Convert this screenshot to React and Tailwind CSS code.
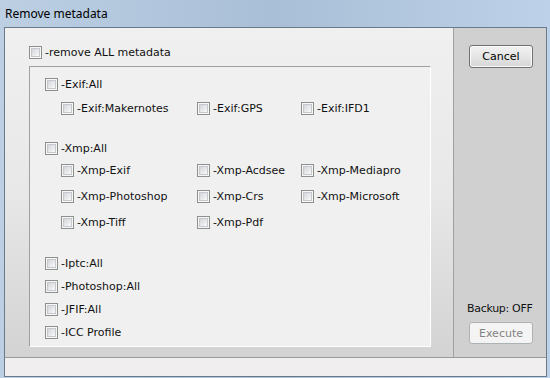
import React from "react";

const font = { fontFamily: '"DejaVu Sans", Verdana, sans-serif' };

function Box() {
  return (
    <span className="box-border flex h-[13px] w-[13px] shrink-0 border border-[#8e8f8f] bg-[#f7f7f7] p-[1px]">
      <span className="box-border flex-1 border border-[#c5c8cc] bg-gradient-to-br from-[#d3d5d9] via-[#e6e7e9] to-[#fbfbfb]" />
    </span>
  );
}

function Check({ label, className = "" }) {
  return (
    <div className={"flex h-[22px] items-center gap-[3px] " + className}>
      <Box />
      <span className="whitespace-nowrap text-[11px] leading-none text-[#111]">{label}</span>
    </div>
  );
}

export default function App() {
  return (
    <div
      className="flex h-[378px] w-[550px] flex-col overflow-hidden bg-gradient-to-r from-[#bccfe3] via-[#a9bfd7] to-[#bdd2e8]"
      style={font}
    >
      {/* title bar */}
      <div className="flex h-[27px] shrink-0 items-center pl-[5px]">
        <span
          className="text-[12px] leading-none text-black"
          style={{ fontFamily: '"Noto Sans", "Open Sans", sans-serif' }}
        >
          Remove metadata
        </span>
      </div>
      {/* window body */}
      <div className="flex flex-1 pb-[1px] pl-[4px] pr-[3px]">
        <div className="flex flex-1 flex-col border border-[#6b7a8b]">
          <div className="flex flex-1">
            {/* left panel */}
            <div className="flex w-[448px] flex-col bg-gradient-to-b from-[#f0f0f0] via-[#e8e8e8] to-[#d3d3d3]">
              <div className="pl-[24px] pt-[13px]">
                <Check label="-remove ALL metadata" />
              </div>
              <div className="ml-[24px] mt-[3px] box-border h-[281px] w-[402px] border-b border-l border-r border-t border-b-white border-l-[#a0a0a0] border-r-white border-t-[#a0a0a0] bg-[#f0f0f0] pl-[15px] pt-[6px]">
                <Check label="-Exif:All" />
                <div className="mt-[2px] grid grid-cols-[136px_104px_auto] pl-[16px]">
                  <Check label="-Exif:Makernotes" />
                  <Check label="-Exif:GPS" />
                  <Check label="-Exif:IFD1" />
                </div>
                <Check label="-Xmp:All" className="mt-[18px]" />
                <div className="grid grid-cols-[136px_104px_auto] gap-y-[4px] pl-[16px]">
                  <Check label="-Xmp-Exif" />
                  <Check label="-Xmp-Acdsee" />
                  <Check label="-Xmp-Mediapro" />
                  <Check label="-Xmp-Photoshop" />
                  <Check label="-Xmp-Crs" />
                  <Check label="-Xmp-Microsoft" />
                  <Check label="-Xmp-Tiff" />
                  <Check label="-Xmp-Pdf" />
                </div>
                <Check label="-Iptc:All" className="mt-[19px]" />
                <Check label="-Photoshop:All" className="mt-[1px]" />
                <Check label="-JFIF:All" className="mt-[1px]" />
                <Check label="-ICC Profile" className="mt-[1px]" />
              </div>
            </div>
            {/* right panel */}
            <div className="flex w-[93px] flex-col items-start border-l border-[#a0a0a0] bg-[#d0d0d0] pl-[15px] pt-[17px]">
              <button className="box-border flex h-[23px] w-[64px] items-center justify-center rounded-[3px] border border-[#707070] bg-gradient-to-b from-[#f2f2f2] via-[#e6e6e6] to-[#d6d6d6] text-[11px] leading-none text-black shadow-[inset_0_0_0_1px_#fbfbfb]">
                Cancel
              </button>
              <div className="flex-1" />
              <span className="-ml-[2px] text-[11px] leading-none tracking-[-0.3px] text-[#111]">Backup: OFF</span>
              <button className="mb-[13px] mt-[8px] box-border flex h-[22px] w-[64px] items-center justify-center rounded-[3px] border border-[#adb2b5] bg-[#f4f4f4] text-[11px] leading-none text-[#838383]">
                Execute
              </button>
            </div>
          </div>
          {/* status bar */}
          <div className="h-[19px] shrink-0 border-t border-[#9a9a9a] bg-[#f0eeee]" />
        </div>
      </div>
    </div>
  );
}
